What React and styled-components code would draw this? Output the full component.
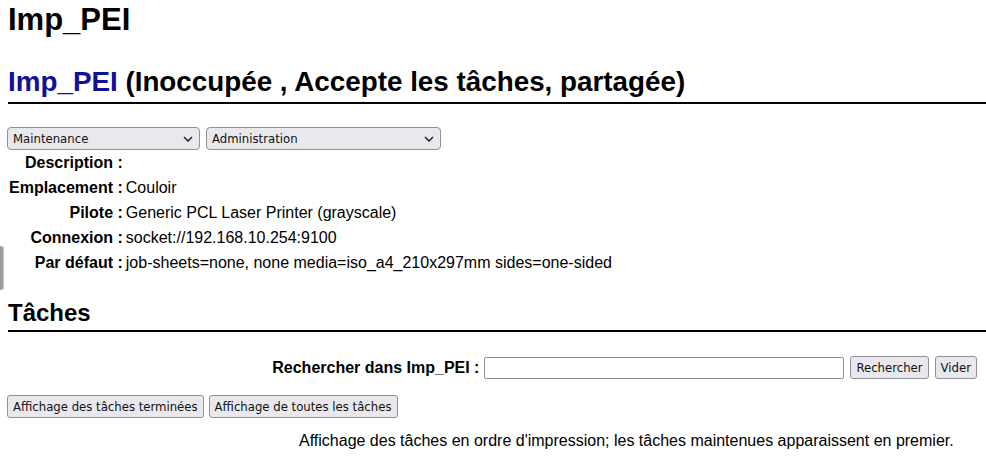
import React from 'react'
import styled, { createGlobalStyle } from 'styled-components';

const GlobalStyle = createGlobalStyle`
  body {
    margin: 0;
    background: #fff;
    color: #000;
    font-family: 'Liberation Sans', Arial, sans-serif;
    font-size: 16px;
  }
`;

export default function App() {
    return (
        <>
            <GlobalStyle />
            <Page>
                <EdgeTab />
                <Title>Imp_PEI</Title>
                <Heading $size={27.8} $top={29} $line={32} $pad={4}>
                    <PrinterLink href="#">Imp_PEI</PrinterLink> (Inoccupée , Accepte les tâches, partagée)
                </Heading>

                <Controls>
                    <SelectBox $width={193}>
                        <Select defaultValue="maint">
                            <option value="maint">Maintenance</option>
                        </Select>
                        <Chevron />
                    </SelectBox>
                    <SelectBox $width={235}>
                        <Select defaultValue="admin">
                            <option value="admin">Administration</option>
                        </Select>
                        <Chevron />
                    </SelectBox>
                </Controls>

                <Details>
                    <Label>Description :</Label>
                    <Value></Value>
                    <Label>Emplacement :</Label>
                    <Value>Couloir</Value>
                    <Label>Pilote :</Label>
                    <Value>Generic PCL Laser Printer (grayscale)</Value>
                    <Label>Connexion :</Label>
                    <Value>socket://192.168.10.254:9100</Value>
                    <Label>Par défaut :</Label>
                    <Value>job-sheets=none, none media=iso_a4_210x297mm sides=one-sided</Value>
                </Details>

                <Heading $size={24} $top={24} $line={28} $pad={3}>Tâches</Heading>

                <SearchRow>
                    <SearchLabel>Rechercher dans Imp_PEI :</SearchLabel>
                    <SearchInput type="text" />
                    <Button>Rechercher</Button>
                    <Button>Vider</Button>
                </SearchRow>

                <ButtonRow>
                    <Button>Affichage des tâches terminées</Button>
                    <Button>Affichage de toutes les tâches</Button>
                </ButtonRow>

                <Note>Affichage des tâches en ordre d'impression; les tâches maintenues apparaissent en premier.</Note>
            </Page>
        </>
    )
}

function Chevron() {
    return (
        <ChevronIcon width="10" height="6" viewBox="0 0 10 6">
            <polyline points="1,1 5,5 9,1" fill="none" stroke="#222" strokeWidth="1.5" />
        </ChevronIcon>
    )
}

const Page = styled.div`
  position: relative;
  min-height: 458px;
  padding-left: 8px;
`;

const EdgeTab = styled.div`
  position: absolute;
  left: 0;
  top: 243px;
  width: 3px;
  height: 44px;
  background: #9c9c9c;
  border-right: 1px solid #c4c4c4;
  border-radius: 0 3px 3px 0;
`;

const Title = styled.h1`
  margin: 3px 0 0;
  font-size: 31px;
  line-height: 34px;
  font-weight: bold;
`;

const Heading = styled.h2`
  margin: ${p => p.$top}px 0 0;
  padding-bottom: ${p => p.$pad}px;
  font-size: ${p => p.$size}px;
  line-height: ${p => p.$line}px;
  font-weight: bold;
  border-bottom: 2px solid #000;
`;

const PrinterLink = styled.a`
  color: #10109a;
  text-decoration: none;
`;

const Controls = styled.div`
  display: flex;
  gap: 6px;
  margin-top: 23px;
  margin-left: -1px;
`;

const SelectBox = styled.div`
  position: relative;
  width: ${p => p.$width}px;
  height: 23px;
`;

const Select = styled.select`
  appearance: none;
  width: 100%;
  height: 100%;
  box-sizing: border-box;
  padding: 0 20px 0 5px;
  font-family: 'DejaVu Sans Condensed', 'Noto Sans', sans-serif;
  font-size: 13px;
  color: #111;
  background: #e9e9ed;
  border: 1px solid #8f8f9d;
  border-radius: 4px;
`;

const ChevronIcon = styled.svg`
  position: absolute;
  right: 7px;
  top: 9px;
  pointer-events: none;
`;

const Details = styled.div`
  display: grid;
  grid-template-columns: auto 1fr;
  column-gap: 3px;
  grid-auto-rows: 25px;
  line-height: 25px;
  padding-left: 1px;
`;

const Label = styled.div`
  font-weight: bold;
  text-align: right;
  white-space: nowrap;
`;

const Value = styled.div`
  white-space: nowrap;
`;

const SearchRow = styled.div`
  display: flex;
  justify-content: flex-end;
  align-items: center;
  height: 23px;
  margin-top: 24px;
  padding-right: 9px;
  gap: 6px;
`;

const SearchLabel = styled.span`
  font-weight: bold;
  margin-right: -1px;
`;

const SearchInput = styled.input`
  width: 360px;
  height: 22px;
  box-sizing: border-box;
  border: 1px solid #8f8f9d;
  border-radius: 2px;
  background: #fff;
  font-size: 13px;
`;

const Button = styled.button`
  height: 23px;
  box-sizing: border-box;
  padding: 0 5px;
  font-family: 'DejaVu Sans Condensed', 'Noto Sans', sans-serif;
  font-size: 13px;
  color: #111;
  background: #e9e9ed;
  border: 1px solid #8f8f9d;
  border-radius: 3px;
  white-space: nowrap;
`;

const ButtonRow = styled.div`
  display: flex;
  gap: 5px;
  margin-top: 16px;
  margin-left: -1px;
`;

const Note = styled.p`
  margin: 14px 0 0;
  padding-left: 291px;
  line-height: 18px;
  white-space: nowrap;
`;
